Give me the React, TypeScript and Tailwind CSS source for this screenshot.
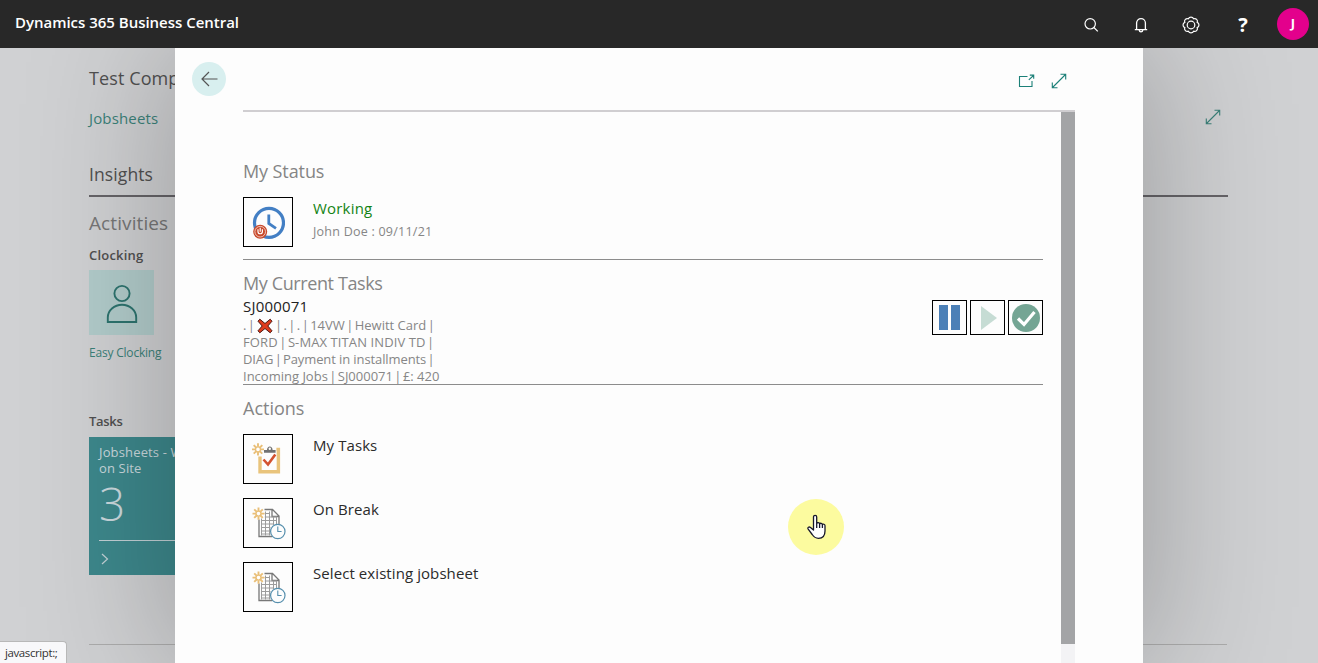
import React from "react";

function ExpandIcon({ className }: { className: string }) {
  return (
    <svg width="16" height="16" viewBox="0 0 16 16" fill="none" stroke="currentColor" strokeWidth="1.1" className={className}>
      <path d="M1.5 14.5 14.5 1.5M9.5 1.3h5.2v5.2M1.3 9.5v5.2h5.2" />
    </svg>
  );
}

function PopOutIcon() {
  return (
    <svg width="17" height="14" viewBox="0 0 17 14" fill="none" stroke="#1c8078" strokeWidth="1.1">
      <path d="M9.5 2.500H1.500v10h12.500V7M10.800 5.800l4.700-4.300M11.800 1.100h3.900v3.600" />
    </svg>
  );
}

function SearchIcon() {
  return (
    <svg width="16" height="16" viewBox="0 0 16 16" fill="none" stroke="#fff" strokeWidth="1.2">
      <circle cx="7.2" cy="6.800" r="5.200" />
      <path d="m10.900 10.500 3.900 3.900" />
    </svg>
  );
}

function BellIcon() {
  return (
    <svg width="14" height="16" viewBox="0 0 14 16" fill="none" stroke="#fff" strokeWidth="1.3">
      <path d="M.8 12.7h12.4M2.600 12.500V6a4.400 4.400 0 0 1 8.800 0v6.500M5.200 13.200c.3 2.200 3.300 2.200 3.600 0" />
    </svg>
  );
}

function GearIcon() {
  return (
    <svg width="18" height="18" viewBox="0 0 18 18" fill="none" stroke="#fff" strokeWidth="1.200">
      <path d="M15.200 6.430a2.750 2.750 0 0 1 0 5.140a2.750 2.750 0 0 1-3.630 3.630a2.750 2.750 0 0 1-5.140 0a2.750 2.750 0 0 1-3.630-3.630a2.750 2.750 0 0 1 0-5.140a2.750 2.750 0 0 1 3.630-3.630a2.750 2.750 0 0 1 5.140 0a2.750 2.750 0 0 1 3.630 3.630Z" />
      <circle cx="9" cy="9" r="3.800" />
    </svg>
  );
}

function StatusClockIcon() {
  return (
    <svg width="34" height="34" viewBox="0 0 34 34" fill="none">
      <circle cx="18" cy="17.800" r="14.500" stroke="#437fc4" strokeWidth="3.200" />
      <path d="M17.800 9.500v9l7.200 4.800" stroke="#437fc4" strokeWidth="2.800" />
      <circle cx="9.200" cy="26.700" r="7" fill="#c8492b" />
      <circle cx="9.200" cy="26.700" r="5.300" stroke="#f3d3c9" strokeWidth=".9" />
      <path d="M7 24.300v2.500c0 2.600 4.400 2.600 4.400 0v-2.500M9.200 22.700v4" stroke="#fff" strokeWidth="1.200" />
    </svg>
  );
}

function Sparkle() {
  return (
    <g stroke="#e9bf78" strokeWidth="1.900">
      <path d="M6.500 .5v3.500M6.500 9.200v3.500M.5 6.600h3.500M9 6.600h3.500M2.200 2.300l2.400 2.400M8.400 8.500l2.400 2.400M10.800 2.300 8.400 4.700M4.600 8.500l-2.400 2.400" />
      <circle cx="6.500" cy="6.600" r="2.500" fill="#fff" strokeWidth="1.400" />
    </g>
  );
}

function TasksIcon() {
  return (
    <svg width="34" height="34" viewBox="0 0 34 34" fill="none">
      <path d="M9 14.500v15.200h18.400V7.500h-2" stroke="#e9c47c" strokeWidth="3.400" />
      <path d="M13 10.800V8.100h3c0-4.700 5.600-4.700 5.600 0h3v2.700Z" fill="#727272" />
      <circle cx="18.800" cy="6.700" r="1.200" fill="#fff" />
      <path d="m12.500 17.500 4.500 5 7.300-10" stroke="#d35230" strokeWidth="2.600" />
      <g transform="translate(.500 .800)"><Sparkle /></g>
    </svg>
  );
}

function TimesheetIcon() {
  return (
    <svg width="34" height="34" viewBox="0 0 34 34" fill="none" className="mt-[2px] ml-px">
      <path d="M7 12.500v17h13M12.500 2.500h8l6.500 6.500v9M20 2.500v7h7" stroke="#787878" strokeWidth="1.300" />
      <path d="M9.500 13.500h15M9.500 17h12M9.500 20.500h9M9.500 24h9M9.500 27h9M12.800 6.500H18M12.800 10H25M9.500 11.500v17M13.500 4.500v24M17.500 4.500v24M21.500 10v8M24.500 10v7" stroke="#9c9c9c" strokeWidth="1" />
      <circle cx="25.800" cy="24.500" r="7.200" fill="#fdfdfd" stroke="#568fad" strokeWidth="1.200" />
      <path d="M25.800 19.500v5h3.800" stroke="#568fad" strokeWidth="1.100" />
      <Sparkle />
    </svg>
  );
}

function HandCursor() {
  return (
    <svg width="20" height="26" viewBox="0 0 20 26" fill="#fff" stroke="#17172b" strokeWidth="1.300" strokeLinejoin="round">
      <path d="M6.500 16V3c0-2.300 3.200-2.300 3.200 0v6.500c.5-1.200 2.700-1 2.900.4.700-1 2.600-.8 2.800.7.800-.8 2.600-.5 2.600 1.100V17c0 5-2.700 7.300-6.500 7.300-3.600 0-5-1.800-6.300-3.800l-4-5.400c-1-1.500.9-2.800 2.300-1.600Z" />
      <path d="M9.700 9.500v4.500M12.600 10v4M15.400 10.800V14" />
    </svg>
  );
}

const actions = [
  { label: "My Tasks", icon: <TasksIcon /> },
  { label: "On Break", icon: <TimesheetIcon /> },
  { label: "Select existing jobsheet", icon: <TimesheetIcon /> },
];

function TopBar() {
  return (
    <header className="flex h-12 shrink-0 items-center bg-[#282828] text-white">
      <h1 className="mb-1 ml-[15px] text-[15px] leading-5 font-semibold tracking-[-0.020px]">Dynamics 365 Business Central</h1>
      <div className="mr-[9px] ml-auto flex items-center">
        <button className="mt-[2px] mr-[35px]"><SearchIcon /></button>
        <button className="mt-[2px] mr-[34px]"><BellIcon /></button>
        <button className="mt-[2px] mr-[38px]"><GearIcon /></button>
        <button className="mt-[2px] mr-[29px] w-[10px] text-center text-[20px] leading-6 font-bold">?</button>
        <div className="flex size-8 items-center justify-center rounded-full bg-[#e3008c] text-[13px] font-bold">J</div>
      </div>
    </header>
  );
}

function RoleCenter() {
  return (
    <main className="flex h-[615px] flex-col px-[89px] text-[#505050]">
      <h2 className="mt-[18px] text-[18px] leading-6 font-medium tracking-[0.100px] whitespace-nowrap">Test Company</h2>
      <div className="mt-4 flex items-center justify-between text-[#3b8179]">
        <span className="text-[15px] leading-6 tracking-[0.150px]">Jobsheets</span>
        <ExpandIcon className="mr-2 mb-[2px]" />
      </div>
      <div className="mt-8 h-[35px] w-[1139px] border-b-2 border-[#666468] text-[17.500px] leading-6 font-medium tracking-[0.100px]">Insights</div>
      <h3 className="mt-[14px] text-[19px] leading-6 tracking-[0.100px] text-[#777]">Activities</h3>
      <h4 className="mt-[10px] text-[13px] leading-5 font-semibold tracking-[0.200px]">Clocking</h4>
      <div className="mt-[5px] flex size-[65px] items-center justify-center bg-[#b2cccb]">
        <svg width="32" height="40" viewBox="0 0 32 40" fill="none" stroke="#2d746f" strokeWidth="1.900" className="mt-[2px]">
          <circle cx="16" cy="9.500" r="7.600" />
          <path d="M1.800 38V33.500a14.200 12.800 0 0 1 28.400 0V38Z" />
        </svg>
      </div>
      <div className="mt-2 text-[12px] leading-5 tracking-[-0.200px] text-[#3b8179]">Easy Clocking</div>
      <h4 className="mt-[48px] text-[13px] leading-5 font-semibold tracking-[-0.300px]">Tasks</h4>
      <div className="mt-[6px] h-[138px] w-[138px] bg-[#3d888c] px-[10px] pt-[7px] text-[#cbd9de]">
        <div className="text-[13px] leading-4 font-medium tracking-[0.150px] whitespace-nowrap">Jobsheets - Waiting<br />on Site</div>
        <div className="mt-[7px] text-[46px] leading-[40px] font-light">3</div>
        <div className="mt-[17px] h-px w-[118px] bg-[#c3d1d6]" />
        <svg className="mt-3 ml-[2px]" width="8" height="12" viewBox="0 0 8 12" fill="none" stroke="#c3d1d6" strokeWidth="1.200"><path d="m1 1 5.500 5L1 11" /></svg>
      </div>
      <div className="mt-[69px] h-px w-[1138px] bg-[#acacac]" />
    </main>
  );
}

function StatusSection() {
  return (
    <section className="h-[148px] border-b border-[#8c8c8c] pt-[47px]">
      <h3 className="text-[18px] leading-6 tracking-[-0.100px] text-[#858585]">My Status</h3>
      <div className="mt-[14px] flex gap-5">
        <div className="flex size-[50px] items-center justify-center border border-black"><StatusClockIcon /></div>
        <div>
          <div className="-mt-px text-[15px] leading-6 tracking-[0.200px] text-[#148414]">Working</div>
          <div className="mt-px text-[12.500px] leading-[22px] tracking-[0.240px] text-[#868686]">John Doe : 09/11/21</div>
        </div>
      </div>
    </section>
  );
}

function Pipe() {
  return <span className="-mx-[2px]">|</span>;
}

function CurrentTask() {
  return (
    <section className="flex h-[125px] justify-between border-b border-[#8c8c8c] pt-[11px]">
      <div className="whitespace-nowrap">
        <h3 className="text-[18px] leading-6 tracking-[-0.390px] text-[#858585]">My Current Tasks</h3>
        <div className="text-[15px] leading-[22px] tracking-[0.200px] text-[#222]">SJ000071</div>
        <div className="text-[13px] leading-[17px] text-[#868686]">
          <div className="flex items-center">
            <span className="w-[11px]">. <Pipe /></span>
            <svg className="mr-[4px] ml-[3px]" width="16" height="16" viewBox="0 0 16 16"><path d="M2.800 1.200 8 5.500l5.200-4.300 1.800 2L10.800 8l4.200 4.800-1.800 2L8 10.500l-5.200 4.300-1.800-2L5.200 8 1 3.200Z" fill="#de3b1d" stroke="#4c1710" strokeWidth="1" /></svg>
            <span><Pipe /> . <Pipe /> . <Pipe /> 14VW <Pipe /> Hewitt Card <Pipe /></span>
          </div>
          <div className="tracking-[0.100px]">FORD <Pipe /> S-MAX TITAN INDIV TD <Pipe /></div>
          <div className="tracking-[-0.100px]">DIAG <Pipe /> Payment in installments <Pipe /></div>
          <div>Incoming Jobs <Pipe /> SJ000071 <Pipe /> £: 420</div>
        </div>
      </div>
      <div className="mt-[29px] flex gap-[3px]">
        <button className="flex size-[35px] items-center justify-center gap-[3px] border border-black">
          <span className="h-[25px] w-[9px] bg-[#4c80b7]" />
          <span className="h-[25px] w-[9px] bg-[#4c80b7]" />
        </button>
        <button className="flex size-[35px] items-center justify-center border border-black">
          <svg className="ml-[2px]" width="16" height="24" viewBox="0 0 16 24"><path d="M0 0 16 12 0 24Z" fill="#c6dcd4" /></svg>
        </button>
        <button className="flex size-[35px] items-center justify-center border border-black">
          <svg width="28" height="28" viewBox="0 0 28 28" fill="none"><circle cx="14" cy="14" r="14" fill="#74a594" /><path d="m6 14.500 6 6L22.500 8" stroke="#fff" strokeWidth="3.200" /></svg>
        </button>
      </div>
    </section>
  );
}

export default function App() {
  return (
    <div className="relative flex h-[663px] w-[1318px] flex-col overflow-hidden bg-[#d0d1d3] font-['Open_Sans','Noto_Sans',sans-serif]">
      <TopBar />
      <div className="relative h-[615px] overflow-hidden">
        <RoleCenter />
        <div className="absolute top-0 left-[175px] flex h-[615px] w-[968px] flex-col bg-[#fdfdfd] shadow-[0_0_130px_8px_rgba(0,0,0,0.25)]">
          <div className="flex h-[62px] shrink-0 items-start justify-between pt-[14px] pr-[76px] pl-[17px]">
            <button className="flex size-[34px] items-center justify-center rounded-full bg-[#d8efef]">
              <svg width="17" height="16" viewBox="0 0 17 16" fill="none" stroke="#555" strokeWidth="1.200"><path d="M16.500 8H1M8 1 1 8l7 7" /></svg>
            </button>
            <div className="mt-[11px] flex items-center gap-4">
              <PopOutIcon />
              <ExpandIcon className="text-[#1c8078]" />
            </div>
          </div>
          <div className="mr-[68px] ml-[68px] flex flex-1 border-t-2 border-[#d0ced1]">
            <div className="mr-[18px] w-[800px]">
              <StatusSection />
              <CurrentTask />
              <section className="pt-[11px]">
                <h3 className="text-[18px] leading-6 text-[#858585]">Actions</h3>
                <div className="mt-[14px] flex flex-col gap-[14px]">
                  {actions.map((action) => (
                    <div key={action.label} className="flex gap-5">
                      <div className="flex size-[50px] items-center justify-center border border-black">{action.icon}</div>
                      <span className="-mt-px text-[15px] leading-6 tracking-[0.080px] text-[#2b2b2b]">{action.label}</span>
                    </div>
                  ))}
                </div>
              </section>
            </div>
            <div className="w-[14px] bg-[#f3f3f5]"><div className="h-[532px] bg-[#a3a4a6]" /></div>
          </div>
        </div>
      </div>
      <div className="absolute top-[499px] left-[788px] flex size-14 items-center justify-center rounded-full bg-[#fcfb9f] pl-[2px]"><HandCursor /></div>
      <div className="absolute bottom-0 left-0 h-[22px] w-[67px] rounded-tr border-t border-r border-[#b8b8b8] bg-[#f8f8fa] pl-[5px] text-[11.500px] leading-[22px] tracking-[-0.400px] text-[#333]">javascript:;</div>
    </div>
  );
}
